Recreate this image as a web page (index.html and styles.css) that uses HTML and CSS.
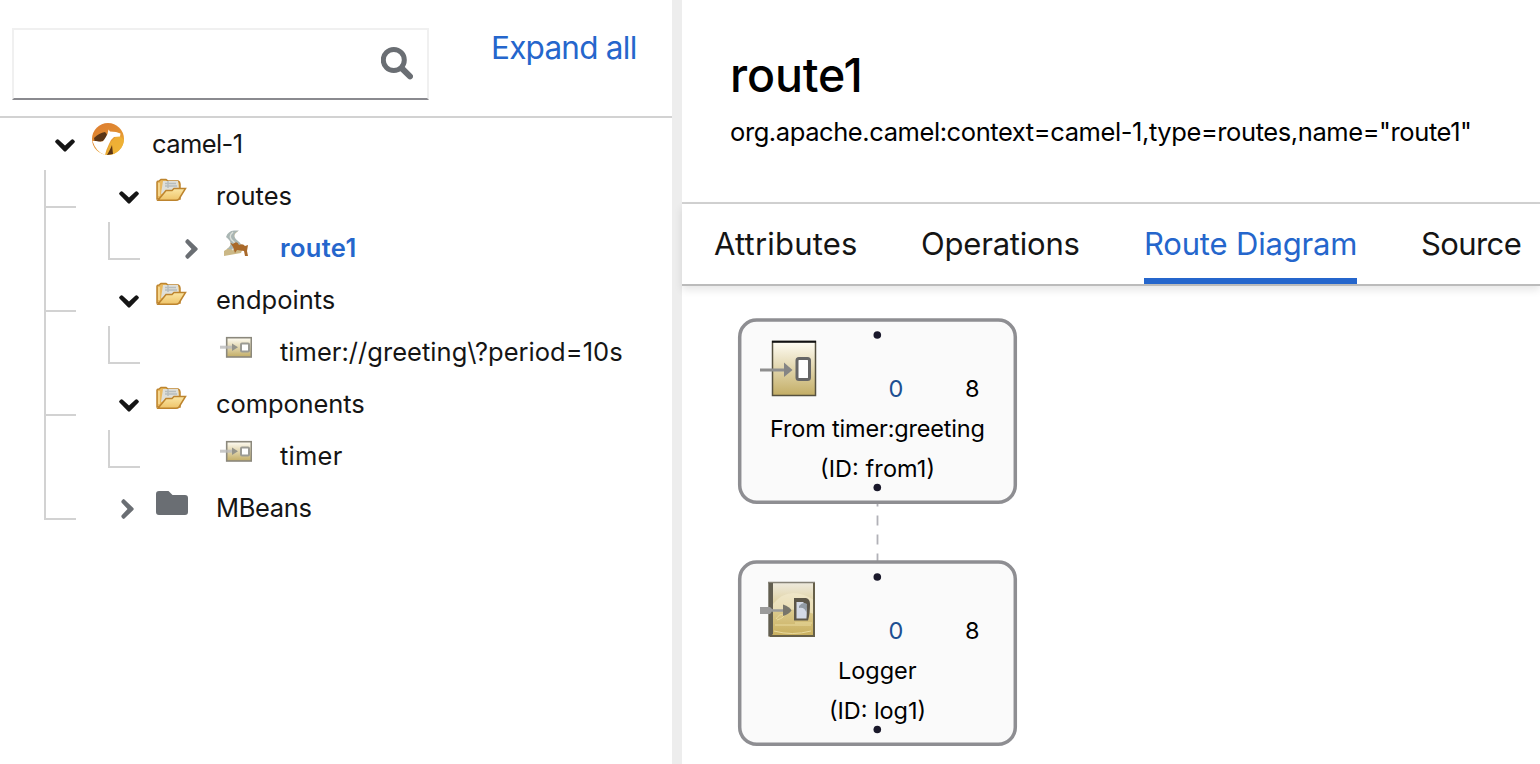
FILE: index.html
```html
<!DOCTYPE html>
<html lang="en">
<head>
<meta charset="utf-8">
<title>route1 - Route Diagram</title>
<link rel="stylesheet" href="styles.css">
</head>
<body>
<svg class="sprites" aria-hidden="true">
  <defs>
    <linearGradient id="gold" x1="0" y1="0" x2="0" y2="1"><stop offset="0" stop-color="#fffdf4"/><stop offset="1" stop-color="#c3ad65"/></linearGradient>
    <linearGradient id="goldflat" x1="0" y1="0" x2="0" y2="1"><stop offset="0" stop-color="#eeeade"/><stop offset="0.5" stop-color="#dccb90"/><stop offset="1" stop-color="#c8ae5c"/></linearGradient>
    <linearGradient id="flap" x1="0" y1="0" x2="0" y2="1"><stop offset="0" stop-color="#fbe7a6"/><stop offset="1" stop-color="#eec368"/></linearGradient>
    <linearGradient id="sun" x1="0" y1="0" x2="0.6" y2="1"><stop offset="0" stop-color="#de7c31"/><stop offset="0.5" stop-color="#e08a30"/><stop offset="1" stop-color="#efb336"/></linearGradient>
  </defs>
  <symbol id="down" viewBox="0 0 20 13"><path d="M0.500 3.500 Q-0.300 2.500 0.500 1.700 L1.800 0.600 Q2.800 0 3.700 0.700 L10 6.500 L16.300 0.700 Q17.200 0 18.200 0.600 L19.500 1.700 Q20.300 2.500 19.500 3.500 L11 12.300 Q10 13.200 9 12.300Z" fill="currentColor"/></symbol>
  <symbol id="right" viewBox="0 0 13 20"><path d="M3.500 0.500 Q2.500 -0.300 1.700 0.500 L0.600 1.800 Q0 2.800 0.700 3.700 L6.500 10 L0.700 16.300 Q0 17.200 0.600 18.200 L1.700 19.500 Q2.500 20.300 3.500 19.500 L12.300 11 Q13.200 10 12.300 9Z" fill="currentColor"/></symbol>
  <symbol id="open" viewBox="0 0 32 32">
    <path d="M1 24 V7 Q1 6 3 6 L5 4.500 H10 L12 6 H22 Q24 7 24 9 V24 Z" fill="#e9b95f" stroke="#bd842e" stroke-width="1.500"/>
    <path d="M5 19 L7 6 L22 6 L23 15 Z" fill="#dfdfd8"/>
    <path d="M9 8.500 H20 M9 11 H21 M12 6 V13" stroke="#b7bdbd" stroke-width="1.500"/>
    <path d="M3 8 V21" stroke="#f9df9b" stroke-width="1.500"/>
    <path d="M2 25.300 L10 15.500 H16 L18 13.500 H29.500 L23 24 Q22 25.300 20 25.300 Z" fill="url(#flap)" stroke="#bd842e" stroke-width="1.500"/>
  </symbol>
  <symbol id="end" viewBox="0 0 32 32">
    <rect x="6.700" y="6.700" width="24.600" height="19.300" fill="url(#gold)" stroke="#8b887c" stroke-width="1.600"/>
    <path d="M0 16.200 H14" stroke="#bbb" stroke-width="3" opacity="0.800"/>
    <path d="M12 12.500 L18 16.200 L12 20Z" fill="#95948a"/>
    <rect x="21" y="12.500" width="8" height="8" rx="1" fill="#fff" stroke="#9b9b94" stroke-width="2"/>
  </symbol>
</svg>

<div class="layout">
  <aside class="side">
    <div class="toolbar">
      <div class="search">
        <svg class="glass" viewBox="0 0 32 32"><circle cx="12.800" cy="13" r="10.500" fill="none" stroke="currentColor" stroke-width="5"/><path d="M21 21.500 L29 29.300" stroke="currentColor" stroke-width="6" stroke-linecap="round"/></svg>
      </div>
      <a class="expand">Expand all</a>
    </div>
    <ul class="tree">
      <li>
        <div class="row root"><span class="toggle"><svg class="down"><use href="#down"/></svg></span>
          <svg class="icon" viewBox="0 0 32 32"><circle cx="16" cy="16" r="16" fill="url(#sun)"/><path d="M18 20 L26 11 L32 17 Q31 26 22 31 L14 32Z" fill="#efb336" opacity=".8"/><path d="M2 15 Q7 10 13 9 Q18 13 11 18 L3 20Z M15 32 Q19 25 20 22 L21 31Z" fill="#5b3516"/><path d="M15.500 11 L16.500 6.500 L18 8.500 L24 9 L28.500 10.500 L28 13.500 L22 14 Q19 16 17 21 Q14 27 13 32 Q4 29 .5 18 L4 18 Q11 20 12 17 Q14 14 15.500 11Z" fill="#fff"/></svg>
          <span class="label l-camel">camel-1</span></div>
        <ul class="branch first">
          <li>
            <div class="row"><span class="toggle"><svg class="down"><use href="#down"/></svg></span><svg class="icon"><use href="#open"/></svg><span class="label">routes</span></div>
            <ul class="branch"><li>
              <div class="row"><span class="toggle"><svg class="right"><use href="#right"/></svg></span>
                <svg class="icon" viewBox="0 0 32 32"><path d="M4 24 Q16 17 7 10 Q8 5 14 4 H18 Q11 9 17 14 Q25 19 21 26 L4 29Z" fill="#cbb886"/><path d="M7 22 Q15 17 6 10 Q8 4 14 3.500 H19 Q10 8 18 14 Q24 18 18 23" fill="#aab6b4"/><path d="M13 5 Q7 10 14 15 Q18 19 12 23" fill="none" stroke="#dce0da" stroke-width="1.500"/><path d="M10 15.500 L13 17 Q17 13 19 18 Q23 16 25 19 L28 18 L27 24 L28 29 H25 L24 24 L17 23 L15 26 L13 20Z" fill="#a9692a"/></svg>
                <span class="label active">route1</span></div>
            </li></ul>
          </li>
          <li>
            <div class="row"><span class="toggle"><svg class="down"><use href="#down"/></svg></span><svg class="icon"><use href="#open"/></svg><span class="label">endpoints</span></div>
            <ul class="branch"><li>
              <div class="row"><span class="toggle"></span><svg class="icon"><use href="#end"/></svg><span class="label l-uri">timer://greeting\?period=10s</span></div>
            </li></ul>
          </li>
          <li>
            <div class="row"><span class="toggle"><svg class="down"><use href="#down"/></svg></span><svg class="icon"><use href="#open"/></svg><span class="label l-components">components</span></div>
            <ul class="branch"><li>
              <div class="row"><span class="toggle"></span><svg class="icon"><use href="#end"/></svg><span class="label l-timer">timer</span></div>
            </li></ul>
          </li>
          <li>
            <div class="row"><span class="toggle"><svg class="right"><use href="#right"/></svg></span><svg class="icon folder" viewBox="0 0 32 32"><path d="M3 4 H12.500 L16.500 8 H29 Q32 8 32 11 V25 Q32 28 29 28 H3 Q0 28 0 25 V7 Q0 4 3 4Z"/></svg><span class="label l-mbeans">MBeans</span></div>
          </li>
        </ul>
      </li>
    </ul>
  </aside>
  <div class="splitter"></div>
  <main class="main">
    <header class="head">
      <h1 class="title">route1</h1>
      <p class="object">org.apache.camel:context=camel-1,type=routes,name="route1"</p>
    </header>
    <nav class="tabs">
      <a class="tab t-attr">Attributes</a>
      <a class="tab t-ops">Operations</a>
      <a class="tab t-diagram current">Route Diagram</a>
      <a class="tab t-source">Source</a>
    </nav>
    <svg class="diagram" viewBox="682 286 858 478">
      <path class="edge" d="M877.500 504 V561"/>
      <g>
        <rect class="node" x="739.700" y="320" width="275.600" height="182.300" rx="17"/>
        <rect x="772.500" y="341.500" width="43" height="54" fill="url(#gold)" stroke="#55503f" stroke-width="1.500"/>
        <path d="M772 341.700 H816" stroke="#111" stroke-width="2"/>
        <path d="M760 370 H785" stroke="#8e8e8e" stroke-width="3"/>
        <path d="M784 362.500 L792.500 370 L784 377Z" fill="#858585"/>
        <rect x="797" y="358.500" width="12.500" height="21" rx="2" fill="#fff" stroke="#666" stroke-width="3"/>
        <circle class="dot" cx="877.300" cy="335" r="3.800"/>
        <text class="count blue" x="888.500" y="397" textLength="16">0</text>
        <text class="count" x="965" y="397" textLength="14">8</text>
        <text class="name" x="770" y="437" textLength="215">From timer:greeting</text>
        <text class="name" x="820" y="477" textLength="115">(ID: from1)</text>
        <circle class="dot" cx="877.300" cy="487.500" r="3.800"/>
      </g>
      <g>
        <rect class="node" x="739.700" y="562" width="275.600" height="182.300" rx="17"/>
        <rect x="769" y="582.500" width="46" height="54" fill="url(#goldflat)"/>
        <path d="M773 604 Q789 584 814 600 V614 Q792 606 773 612Z" fill="#f3ebcf" opacity=".6"/>
        <path d="M775 625 H811 M774 631 Q792 636 811 631 M776 619 Q780 613 783 615 T777 620 M795 623 H812" fill="none" stroke="#e9da9f" stroke-width="1"/>
        <path d="M768 582.500 H815" stroke="#858176" stroke-width="1.500"/>
        <path d="M814 583 V636 H770" fill="none" stroke="#665f48" stroke-width="2"/>
        <path d="M768.300 583 h4.700 v51 l-3 2.500 h-1.700z" fill="#625e50"/>
        <path d="M760 607 H770 L773 610 L770 614 H760Z" fill="#9b9b9b"/>
        <path d="M772 610.500 H784" stroke="#999" stroke-width="2.500"/>
        <path d="M783 604.500 Q790 607 791.500 610.500 Q789 614 783 616Z" fill="#77756b"/>
        <path d="M794 598 H806 Q810 599 810 604 Q810 614 808 620.500 H794Z" fill="#5c5648"/>
        <path d="M796.500 602 H803 Q808 605 806.500 618.500 H796.500Z" fill="#d4dae6"/>
        <path d="M799 606 Q803 601 807 604 L806.500 613 Q805 607 799 608Z" fill="#929ba4"/>
        <circle class="dot" cx="877.300" cy="577" r="3.800"/>
        <text class="count blue" x="888.500" y="639" textLength="16">0</text>
        <text class="count" x="965" y="639" textLength="14">8</text>
        <text class="name" x="838" y="679" textLength="78.500">Logger</text>
        <text class="name" x="829" y="719" textLength="97">(ID: log1)</text>
        <circle class="dot" cx="877.300" cy="729.500" r="3.800"/>
      </g>
    </svg>
  </main>
</div>
</body>
</html>
```
FILE: styles.css
```css
* { box-sizing: border-box; }
body { margin: 0; background: #fff; color: #151515; font-family: Inter, "Liberation Sans", sans-serif; overflow: hidden; }
ul { list-style: none; margin: 0; padding: 0; }
.sprites { display: block; width: 0; height: 0; }
.layout { display: flex; height: 764px; }
.side { width: 672px; flex: none; }
.splitter { width: 10px; flex: none; background: #ededed; }
.main { flex: 1; min-width: 0; display: flex; flex-direction: column; }

.toolbar { display: flex; height: 118px; padding: 28px 0 0 12px; border-bottom: 2px solid #d2d2d2; }
.search { width: 417px; height: 72px; border: 2px solid #f0f0f0; border-bottom-color: #8a8a8f; display: flex; justify-content: flex-end; padding: 16px 14px 0 0; }
.glass { width: 32px; height: 34px; color: #6a6e73; }
.expand { margin-left: 62px; height: 40px; line-height: 40px; font-size: 31.500px; color: #2566cc; white-space: nowrap; letter-spacing: -0.760px; }

.tree { font-size: 25.500px; }
.row { display: flex; height: 52px; padding-left: 67px; }
.row.root { padding-left: 47px; }
.branch { margin-left: 64px; }
.branch.first { margin-left: 44px; }
.branch > li { background: linear-gradient(#d2d2d2, #d2d2d2) 0 0 / 2px 100% no-repeat, linear-gradient(#d2d2d2, #d2d2d2) 0 36px / 32px 2px no-repeat; }
.branch > li:last-child { background-size: 2px 38px, 32px 2px; }
.toggle { width: 36px; display: flex; justify-content: center; align-items: center; }
.down { width: 20px; height: 13px; margin-top: 3px; }
.right { width: 13px; height: 20px; margin-top: 2px; margin-right: 3px; color: #6a6e73; }
.icon { width: 32px; height: 32px; margin: 5px 28px 0 9px; flex: none; }
.folder { fill: #6a6e73; }
.label { line-height: 52px; white-space: nowrap; }
.l-camel { letter-spacing: -0.600px; }
.l-components { letter-spacing: -0.100px; }
.l-timer { letter-spacing: 0.250px; }
.l-uri { letter-spacing: 0.030px; }
.l-mbeans { letter-spacing: -0.350px; }
.active { color: #2566cc; font-weight: 600; letter-spacing: 0.350px; }

.head { height: 204px; padding: 44px 0 0 48px; border-bottom: 2px solid #d2d2d2; color: #000; }
.title { margin: 0; font-size: 46.500px; line-height: 62px; font-weight: 550; letter-spacing: -0.150px; }
.object { margin: 10px 0 0; font-size: 25.500px; line-height: 32px; white-space: nowrap; letter-spacing: -0.415px; }
.tabs { display: flex; gap: 64px; height: 82px; padding-left: 32px; border-bottom: 2px solid #bbb; box-shadow: 0 4px 8px rgba(0,0,0,.1); flex: none; }
.tab { height: 80px; line-height: 80px; font-size: 31px; white-space: nowrap; }
.t-attr { width: 143px; letter-spacing: 0.200px; }
.t-ops { width: 159px; letter-spacing: -0.200px; }
.t-diagram { width: 213px; letter-spacing: -0.180px; }
.t-source { width: 100px; letter-spacing: -0.600px; }
.current { color: #2566cc; border-bottom: 6px solid #2566cc; }

.diagram { width: 858px; height: 478px; display: block; flex: none; }
.node { fill: #fafafa; stroke: #8e8e92; stroke-width: 3.500; }
.edge { stroke: #b1b1b7; stroke-width: 1.800; stroke-dasharray: 10 9; stroke-dashoffset: 7.500; }
.dot { fill: #1a192b; }
.count, .name { font-size: 23.500px; fill: #000; }
.blue { fill: #1d4f91; }
```
